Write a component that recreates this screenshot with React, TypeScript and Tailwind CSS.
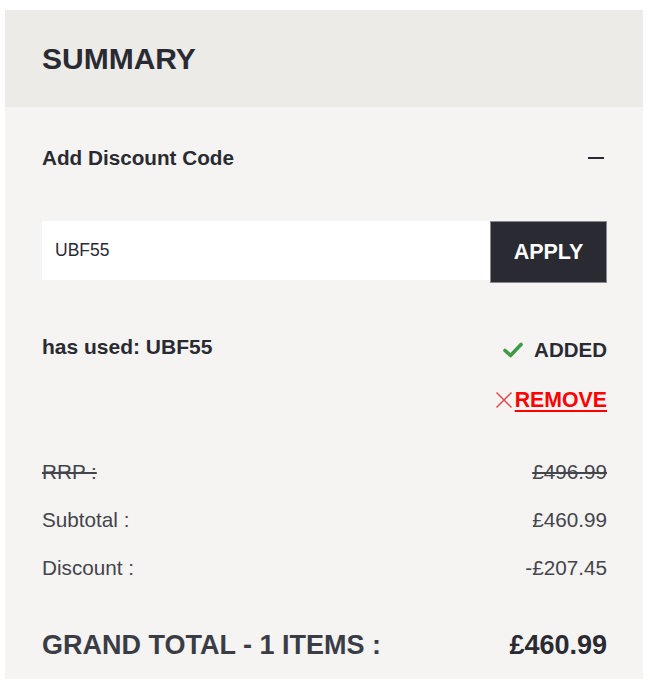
import { useState } from "react";

const font = { fontFamily: '"Liberation Sans", Arial, sans-serif' };

const App = () => {
  const [code, setCode] = useState("UBF55");
  return (
    <div className="min-h-[682px] bg-white pt-[10px]" style={font}>
      <div className="ml-[5px] w-[638px] bg-[#f5f4f2] text-[#2a2a33]">
        {/* header */}
        <div className="h-[97px] flex items-center pl-[37px] bg-[#edebe7]">
          <h2 className="text-[30px] font-bold leading-none">SUMMARY</h2>
        </div>

        <div className="pl-[37px] pr-[36px] pb-[14px]">
          {/* discount toggle */}
          <div className="h-[102px] flex items-center justify-between">
            <span className="text-[20.7px] font-bold">Add Discount Code</span>
            <span className="block w-[16px] h-[2px] bg-[#2a2a33] mr-[3px]" />
          </div>

          {/* code form */}
          <div className="mt-[12px] flex items-start">
            <input
              value={code}
              onChange={(e) => setCode(e.target.value)}
              className="flex-1 h-[59px] bg-white pl-[13px] text-[17.5px] text-[#2a2a33] outline-none border-none"
            />
            <button className="w-[117px] h-[62px] bg-[#2a2a33] border border-[#8a8a8a] text-white text-[21.5px] font-bold">
              APPLY
            </button>
          </div>

          {/* used code */}
          <div className="mt-[47px] flex items-start justify-between">
            <span className="text-[21px] font-bold leading-[34px]">
              has used: UBF55
            </span>
            <span className="pt-[3px] flex items-center gap-[11px] text-[20.5px] font-bold leading-[34px]">
              <svg width="20" height="16" viewBox="0 0 20 16">
                <path
                  d="M2 8.5 L7.5 13.5 L18 2.5"
                  fill="none"
                  stroke="#3e9b45"
                  strokeWidth="3.6"
                  strokeLinecap="round"
                  strokeLinejoin="round"
                />
              </svg>
              ADDED
            </span>
          </div>

          <div className="mt-[16px] flex justify-end">
            <button className="flex items-center gap-[2px] text-[21.3px] font-bold leading-[34px] text-[#ff0000]">
              <svg width="18" height="18" viewBox="0 0 18 18">
                <path
                  d="M1.5 1.5 L16.5 16.5 M16.5 1.5 L1.5 16.5"
                  stroke="#e8484a"
                  strokeWidth="1.5"
                />
              </svg>
              <span className="underline underline-offset-[3px] decoration-2">
                REMOVE
              </span>
            </button>
          </div>

          {/* totals */}
          <div className="mt-[31px] text-[20.7px] text-[#44444c]">
            <div className="flex justify-between leading-[48px] line-through">
              <span>RRP :</span>
              <span>£496.99</span>
            </div>
            <div className="flex justify-between leading-[48px]">
              <span>Subtotal :</span>
              <span>£460.99</span>
            </div>
            <div className="flex justify-between leading-[48px]">
              <span>Discount :</span>
              <span>-£207.45</span>
            </div>
          </div>

          <div className="mt-[33px] flex justify-between items-center leading-[40px]">
            <span className="text-[27px] font-bold text-[#3a3d45]">
              GRAND TOTAL - 1 ITEMS :
            </span>
            <span className="text-[27px] font-bold">£460.99</span>
          </div>
        </div>
      </div>
    </div>
  );
};

export default App;
